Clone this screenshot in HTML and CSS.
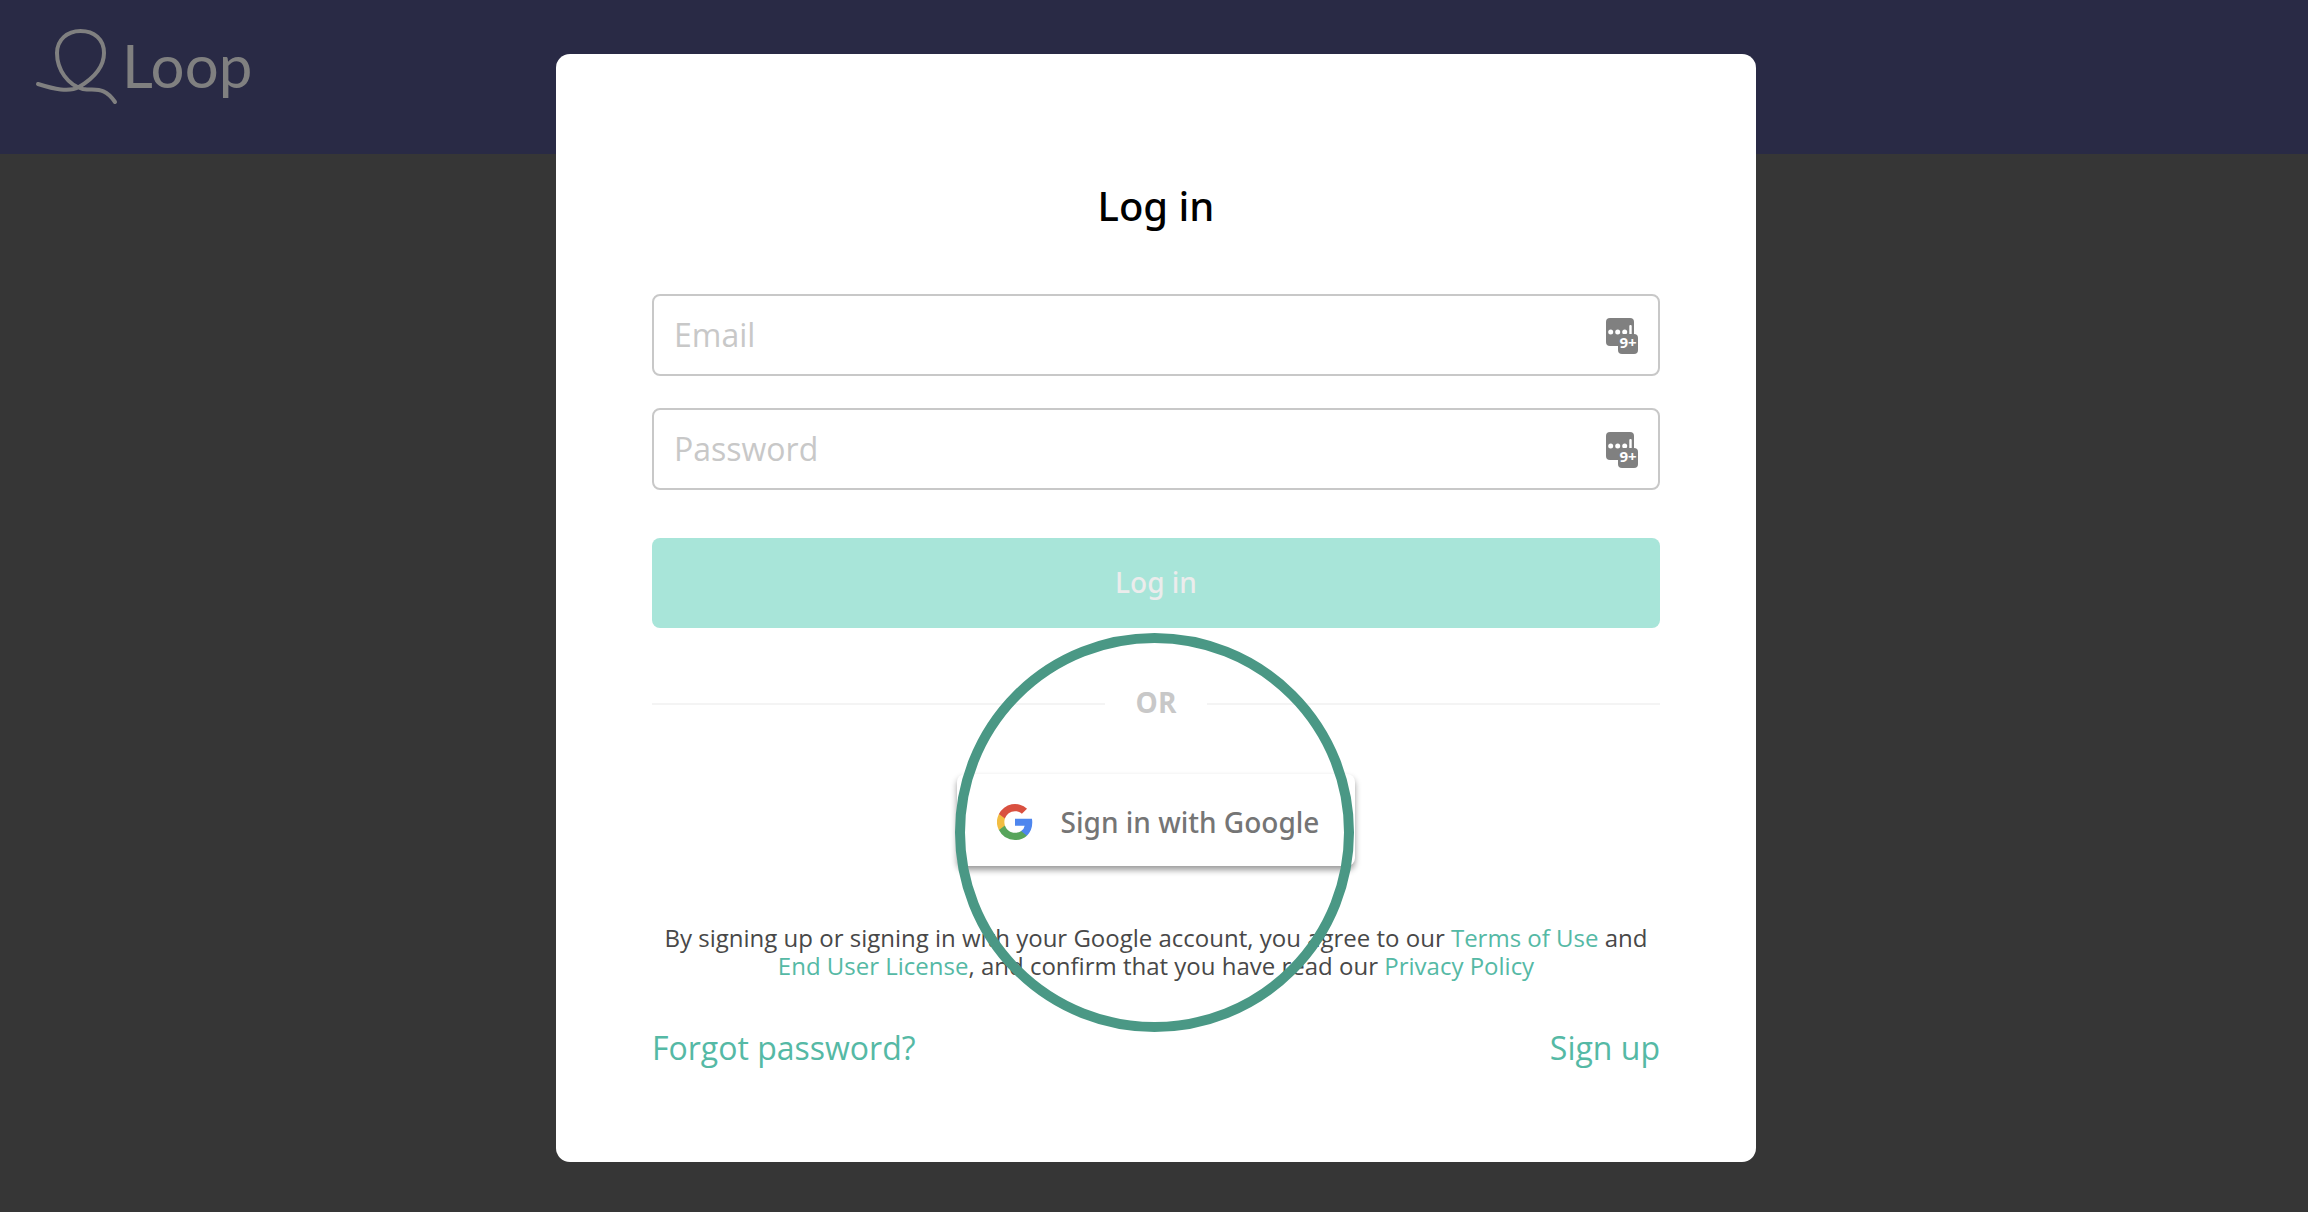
FILE: index.html
```html
<!DOCTYPE html>
<html lang="en">
<head>
  <meta charset="UTF-8">
  <meta name="viewport" content="width=device-width, initial-scale=1.0">
  <title>Loop - Log in</title>
  <link rel="stylesheet" href="styles.css">
</head>
<body>
  <header class="header">
    <a class="logo" href="#">
      <svg class="logo-mark" width="84" height="78" viewBox="0 0 84 78" fill="none" stroke="currentColor" stroke-width="4" stroke-linecap="round">
        <path d="M4 56 C20 61 35 64.500 45 59 C60 50 70 38 70 25 C70 11 60 3 46.500 3 C33 3 23 12 23 25 C23 42 34 57 49 61 C62 63 70 58 81 74"/>
      </svg>
      <span class="logo-text">Loop</span>
    </a>
  </header>

  <main class="overlay">
    <div class="modal">
      <h1>Log in</h1>
      <form>
        <div class="field">
          <input type="email" id="email" placeholder="Email" aria-label="Email">
          <svg class="field-icon" width="32" height="36" viewBox="0 0 32 36">
            <rect width="28" height="28" rx="4" fill="#808080"/>
            <g fill="#fff">
              <circle cx="4.700" cy="14" r="2.500"/>
              <circle cx="11.700" cy="14" r="2.500"/>
              <circle cx="18.700" cy="14" r="2.500"/>
              <rect x="23.300" y="7" width="2.400" height="12" rx="1"/>
            </g>
            <rect x="12" y="16" width="20" height="20" rx="4" fill="#808080"/>
            <text class="field-count" x="22" y="30" text-anchor="middle">9+</text>
          </svg>
        </div>
        <div class="field">
          <input type="password" id="password" placeholder="Password" aria-label="Password">
          <svg class="field-icon" width="32" height="36" viewBox="0 0 32 36">
            <rect width="28" height="28" rx="4" fill="#808080"/>
            <g fill="#fff">
              <circle cx="4.700" cy="14" r="2.500"/>
              <circle cx="11.700" cy="14" r="2.500"/>
              <circle cx="18.700" cy="14" r="2.500"/>
              <rect x="23.300" y="7" width="2.400" height="12" rx="1"/>
            </g>
            <rect x="12" y="16" width="20" height="20" rx="4" fill="#808080"/>
            <text class="field-count" x="22" y="30" text-anchor="middle">9+</text>
          </svg>
        </div>
        <button type="submit" class="login-btn" disabled>Log in</button>
      </form>

      <div class="divider"><span>OR</span></div>

      <button type="button" class="google-btn">
        <svg width="36" height="36" viewBox="0 0 18 18">
          <path fill="#4e86ee" d="M17.640 9.200c0-.640-.060-1.250-.160-1.840H9v3.480h4.840a4.140 4.140 0 0 1-1.800 2.720v2.260h2.920c1.700-1.570 2.680-3.880 2.680-6.620z"/>
          <path fill="#58a55c" d="M9 18c2.430 0 4.470-.800 5.960-2.180l-2.920-2.260c-.800.540-1.840.860-3.040.860-2.340 0-4.330-1.580-5.040-3.710H.960v2.330A9 9 0 0 0 9 18z"/>
          <path fill="#f2bd42" d="M3.960 10.710A5.400 5.400 0 0 1 3.960 7.290V4.960H.960a9 9 0 0 0 0 8.080l3-2.330z"/>
          <path fill="#d95040" d="M9 3.580c1.320 0 2.500.450 3.440 1.350l2.580-2.590A9 9 0 0 0 .960 4.960l3 2.330C4.670 5.160 6.660 3.580 9 3.580z"/>
        </svg>
        <span>Sign in with Google</span>
      </button>

      <p class="legal">
        By signing up or signing in with your Google account, you agree to our <a href="#">Terms of Use</a> and
        <a href="#">End User License</a>, and confirm that you have read our <a href="#">Privacy Policy</a>
      </p>

      <div class="links">
        <a href="#">Forgot password?</a>
        <a href="#">Sign up</a>
      </div>

      <div class="highlight"></div>
    </div>
  </main>
</body>
</html>
```

FILE: styles.css
```css
* {
  box-sizing: border-box;
}
body {
  margin: 0;
  min-height: 100vh;
  background: #363636;
  font-family: "Open Sans", "Noto Sans", sans-serif;
}
a {
  color: #55b9a5;
  text-decoration: none;
}
.header {
  height: 154px;
  padding: 28px 34px;
  background: #292a45;
}
.logo {
  display: flex;
  gap: 4px;
  color: #808080;
}
.logo-text {
  font-family: Lato, sans-serif;
  font-size: 60px;
  font-weight: 400;
  line-height: 74px;
}
.overlay {
  position: absolute;
  top: 0;
  left: 4px;
  right: 0;
  padding: 54px 16px 50px;
}
.modal {
  position: relative;
  max-width: 1200px;
  margin: 0 auto;
  padding: 124px 96px 92px;
  background: #fff;
  border-radius: 14px;
}
h1 {
  margin: 0 0 60px;
  font-family: "Noto Sans", sans-serif;
  font-size: 40px;
  font-weight: 500;
  line-height: 56px;
  text-align: center;
  color: #000;
}
.field {
  position: relative;
  margin-bottom: 32px;
}
.field input {
  display: block;
  width: 100%;
  height: 82px;
  padding: 0 80px 2px 20px;
  border: 2px solid #c8c8c8;
  border-radius: 8px;
  font-family: inherit;
  font-size: 32px;
  color: #484848;
}
.field input::placeholder {
  color: #c8c8c8;
}
.field-icon {
  position: absolute;
  top: 24px;
  right: 22px;
}
.field-count {
  font-size: 15px;
  font-weight: 700;
  fill: #fff;
}
.login-btn {
  width: 100%;
  height: 90px;
  margin-top: 16px;
  padding: 0 0 2px;
  border: none;
  border-radius: 8px;
  background: #a8e5d9;
  font-family: "Noto Sans", sans-serif;
  font-size: 28px;
  font-weight: 500;
  color: #ececec;
}
.divider {
  display: flex;
  align-items: center;
  margin-top: 54px;
  font-size: 28px;
  font-weight: 700;
  line-height: 40px;
  color: #c8c8c8;
}
.divider::before,
.divider::after {
  content: "";
  flex: 1;
  height: 2px;
  background: #f4f4f4;
}
.divider span {
  width: 102px;
  padding-bottom: 4px;
  text-align: center;
}
.google-btn {
  display: flex;
  align-items: center;
  justify-content: center;
  gap: 28px;
  width: 398px;
  height: 92px;
  margin: 48px auto 58px;
  padding: 4px 0 0 4px;
  border: none;
  border-radius: 8px;
  background: #fff;
  box-shadow: 0 4px 6px rgba(0, 0, 0, 0.4);
  font-family: "Noto Sans", sans-serif;
  font-size: 28px;
  font-weight: 500;
  color: #757575;
}
.legal {
  margin: 0 0 46px;
  font-size: 24px;
  line-height: 28px;
  text-align: center;
  color: #484848;
}
.links {
  display: flex;
  justify-content: space-between;
  font-size: 32px;
  line-height: 44px;
}
.highlight {
  position: absolute;
  top: 579px;
  left: calc(50% - 201px);
  width: 399px;
  height: 399px;
  border: 10px solid #4a9885;
  border-radius: 50%;
  pointer-events: none;
}
```
